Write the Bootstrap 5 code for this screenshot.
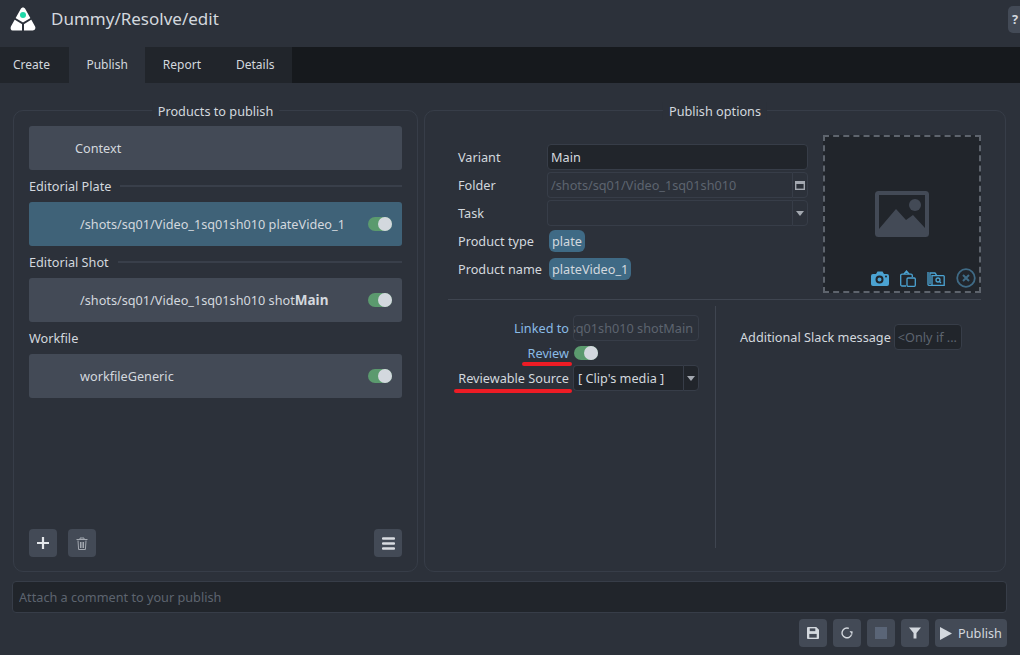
<!DOCTYPE html>
<html lang="en">
<head>
<meta charset="UTF-8">
<title>Publisher</title>
<link rel="stylesheet" href="https://cdn.jsdelivr.net/npm/bootstrap@5.3.0/dist/css/bootstrap.min.css">
<style>
    html, body { height: 655px; overflow: hidden; }
    body { background: #2c313a; color: #d3d8de; font-family: "Noto Sans", sans-serif; font-size: 12.7px; line-height: 18px; }
    .app-head { height: 47px; padding: 0 0 9px 10px; }
    .app-title { font-size: 17px; margin-left: 15px; }
    .help-btn { width: 24px; height: 27px; margin-left: auto; margin-right: -12px; background: #434a56; border-radius: 5px; padding-left: 4px; font-weight: 700; line-height: 27px; }
    .tab-bar { height: 36px; background: #16191d; }
    .tab-item { height: 36px; line-height: 35px; background: #21252b; padding: 0 17.5px; color: #d3d8de; font-size: 12px; text-decoration: none; }
    .tab-item:first-child { padding: 0 19px 0 13px; }
    .tab-item.is-on { background: #2c313a; }
    .main-area { padding: 27px 14px 0 13px; gap: 6px; height: 489px; }
    .group-box { position: relative; border: 1px solid #373d48; border-radius: 10px; height: 462px; }
    .group-left { width: 405px; padding: 15px 15px 14px 15px; }
    .group-right { width: 582px; padding: 24px 24px 23px 22px; }
    .group-title { position: absolute; top: -9px; left: 50%; transform: translateX(-50%); background: #2c313a; padding: 0 6px; white-space: nowrap; }
    .prod-card { height: 44px; background: #434a56; border-radius: 3px; padding-left: 51px; padding-right: 10px; }
    .prod-card.is-sel { background: #3f6278; }
    .prod-card.ctx { padding-left: 46px; }
    .prod-card b { font-size: 13.5px; }
    .sec-head { height: 32px; gap: 9px; }
    .sec-line { flex: 1; height: 2px; background: #393f4a; }
    .toggle-sw { position: relative; display: inline-block; width: 24px; height: 14px; border-radius: 7px; background: #5b9a6e; flex: none; }
    .toggle-sw::after { content: ""; position: absolute; right: 0; top: 0; width: 14px; height: 14px; border-radius: 50%; background: #d3d8de; }
    .tool-btn { width: 28px; height: 28px; padding: 0; background: #434a56; border: 0; border-radius: 4px; display: inline-flex; align-items: center; justify-content: center; flex: none; }
    .tool-btn:hover { background: #4c5461; }
    .trash-btn { margin-left: 11px; }
    .publish-btn { width: 72px; gap: 6px; color: #d3d8de; font-size: 12.7px; }
    .field-input, .field-input:focus, .field-input:disabled { height: 26px; padding: 0 3px; font-size: 12.7px; color: #d3d8de; background: #21252b; border: 1px solid #373d48; border-radius: 4px; box-shadow: none; }
    .field-input:disabled, .field-off { background: #2c313a; color: #5d646f; opacity: 1; }
    .field-input::placeholder { color: #5d646f; opacity: 1; }
    .field-cap { width: 89px; flex: none; white-space: nowrap; }
    .field-row { height: 26px; margin-bottom: 2px; }
    .side-btn { width: 16px; border: 1px solid #373d48; border-radius: 0 4px 4px 0; display: flex; align-items: center; justify-content: center; flex: none; }
    .joined { border-radius: 4px 0 0 4px !important; border-right: 0 !important; }
    .tag-pill { display: inline-block; height: 22px; line-height: 22px; padding: 0 3px; margin-left: 2px; background: #3f6a85; border-radius: 6px; }
    .thumb-box { position: relative; width: 158px; height: 158px; background: #21252b; border: 2px dashed #5e646d; flex: none; }
    .thumb-tools { position: absolute; right: 3px; bottom: 3px; gap: 11px; }
    .form-col { width: 361px; padding: 9px 0 0 11px; }
    .split-line { height: 1px; background: #3f4550; margin: 6px 0 6px 1px; }
    .lower-left { width: 269px; border-right: 1px solid #3f4550; height: 242px; padding-top: 9px; position: relative; }
    .link-cap { color: #8abbe6; }
    .lower-cap { width: 122px; text-align: right; flex: none; margin-right: 4px; white-space: nowrap; }
    .short-field { width: 126px; }
    .review-row { height: 20px; margin-bottom: 2px; }
    .review-row .lower-cap { margin-right: 5px; }
    .linked-box { white-space: nowrap; padding-right: 5px !important; line-height: 24px; }
    .combo-in { background: #21252b !important; padding-left: 4px; }
    .combo-side { background: #21252b; }
    .red-mark { position: absolute; height: 4px; background: #ee1c25; border-radius: 2px; }
    .mark-review { left: 75px; width: 50px; top: 56px; }
    .mark-source { left: 7px; width: 118px; top: 83px; }
    .lower-right { padding: 18px 0 0 24px; }
    .slack-cap { margin: 4px 3px 0 0; white-space: nowrap; }
    .slack-in { width: 68px !important; }
    .comment-wrap { padding: 9px 13px 0 12px; }
    .comment-in, .comment-in:focus { height: 32px; padding: 0 6px; font-size: 12.7px; }
    .action-bar { padding: 6px 13px 0 0; gap: 6px; }
</style>
</head>
<body>
    <div class="app-head d-flex align-items-center">
        <svg width="26" height="24" viewBox="0 0 26 24">
            <path d="M13 0.5c1 0 1.700.5 2.300 1.500l9.800 17.500c.9 1.800-.2 3.900-2.300 3.900H3.200C1.100 23.900 0 21.800.9 19.500L10.700 2c.6-1 1.300-1.500 2.300-1.500z" fill="#fff"/>
            <path d="M4.500 11.500l8.500 5 8.500-5M13 16.500v7.500" fill="none" stroke="#2c313a" stroke-width="2"/>
            <circle cx="13" cy="8" r="3" fill="#1fd8a8"/>
        </svg>
        <div class="app-title">Dummy/Resolve/edit</div>
        <div class="help-btn">?</div>
    </div>

    <nav class="tab-bar d-flex">
        <a class="tab-item" href="#">Create</a>
        <a class="tab-item is-on" href="#">Publish</a>
        <a class="tab-item" href="#">Report</a>
        <a class="tab-item" href="#">Details</a>
    </nav>

    <div class="main-area d-flex">
        <!-- products list -->
        <div class="group-box group-left d-flex flex-column">
            <div class="group-title">Products to publish</div>
            <div class="prod-card ctx d-flex align-items-center">Context</div>
            <div class="sec-head d-flex align-items-center">Editorial Plate<span class="sec-line"></span></div>
            <div class="prod-card is-sel d-flex align-items-center justify-content-between">
                <span>/shots/sq01/Video_1sq01sh010 plateVideo_1</span><span class="toggle-sw"></span>
            </div>
            <div class="sec-head d-flex align-items-center">Editorial Shot<span class="sec-line"></span></div>
            <div class="prod-card d-flex align-items-center justify-content-between">
                <span>/shots/sq01/Video_1sq01sh010 shot<b>Main</b></span><span class="toggle-sw"></span>
            </div>
            <div class="sec-head d-flex align-items-center">Workfile</div>
            <div class="prod-card d-flex align-items-center justify-content-between">
                <span>workfileGeneric</span><span class="toggle-sw"></span>
            </div>
            <div class="d-flex mt-auto">
                <button class="tool-btn" type="button">
                    <svg width="14" height="14" viewBox="0 0 14 14"><path d="M7 1v12M1 7h12" stroke="#e4e7eb" stroke-width="2.200"/></svg>
                </button>
                <button class="tool-btn trash-btn" type="button">
                    <svg width="12" height="13" viewBox="0 0 12 13" fill="none" stroke="#a3a8b0"><path d="M.5 2.500h11M4 2.500V1h4v1.500M2 3.500l.6 9h6.800l.6-9M4.500 5v6M6 5v6M7.500 5v6" stroke-width="1"/></svg>
                </button>
                <button class="tool-btn ms-auto" type="button">
                    <svg width="13" height="13" viewBox="0 0 13 13"><path d="M1 1.500h11M1 6.500h11M1 11.500h11" stroke="#d9dce1" stroke-width="2.400" stroke-linecap="round"/></svg>
                </button>
            </div>
        </div>

        <!-- publish options -->
        <div class="group-box group-right">
            <div class="group-title">Publish options</div>
            <div class="d-flex justify-content-between">
                <div class="form-col">
                    <div class="field-row d-flex align-items-center">
                        <span class="field-cap">Variant</span>
                        <input class="form-control field-input" value="Main">
                    </div>
                    <div class="field-row d-flex align-items-center">
                        <span class="field-cap">Folder</span>
                        <input class="form-control field-input joined" value="/shots/sq01/Video_1sq01sh010" disabled>
                        <span class="side-btn h-100">
                            <svg width="10" height="9" viewBox="0 0 10 9"><rect x=".7" y=".7" width="8.600" height="7.600" fill="none" stroke="#a3a8b0" stroke-width="1.400"/><rect x="1" y="1" width="8" height="2" fill="#a3a8b0"/></svg>
                        </span>
                    </div>
                    <div class="field-row d-flex align-items-center">
                        <span class="field-cap">Task</span>
                        <input class="form-control field-input joined" disabled>
                        <span class="side-btn h-100">
                            <svg width="8" height="5" viewBox="0 0 8 5"><path d="M0 0h8L4 5z" fill="#a3a8b0"/></svg>
                        </span>
                    </div>
                    <div class="field-row d-flex align-items-center">
                        <span class="field-cap">Product type</span><span class="tag-pill">plate</span>
                    </div>
                    <div class="field-row d-flex align-items-center">
                        <span class="field-cap">Product name</span><span class="tag-pill">plateVideo_1</span>
                    </div>
                </div>
                <div class="thumb-box d-flex align-items-center justify-content-center">
                    <svg width="54" height="46" viewBox="0 0 54 46">
                        <rect x="2" y="2" width="50" height="42" rx="1.500" fill="none" stroke="#434a56" stroke-width="4"/>
                        <circle cx="40" cy="14" r="6" fill="#434a56"/>
                        <path d="M4 38L21 18l10 11 7-5 12 13v6H4z" fill="#434a56"/>
                    </svg>
                    <div class="thumb-tools d-flex align-items-center">
                        <svg width="18" height="15" viewBox="0 0 18 15"><path d="M2 3h3l1.500-2.500h5L13 3h3a2 2 0 0 1 2 2v8a2 2 0 0 1-2 2H2a2 2 0 0 1-2-2V5a2 2 0 0 1 2-2z" fill="#4ba3d2"/><circle cx="8.500" cy="8.500" r="3" fill="none" stroke="#21252b" stroke-width="2"/><circle cx="15" cy="5.500" r="1" fill="#21252b"/></svg>
                        <svg width="16" height="17" viewBox="0 0 16 17" fill="none" stroke="#4ba3d2" stroke-width="1.300"><path d="M6 16H2a1.300 1.300 0 0 1-1.300-1.300V5.500A1.300 1.300 0 0 1 2 4.200h9a1.300 1.300 0 0 1 1.300 1.300V7M4 4l2.500-3L9 4"/><rect x="7" y="8" width="8.300" height="8.300" rx="1"/></svg>
                        <svg width="18" height="15" viewBox="0 0 18 15" fill="none" stroke="#4ba3d2" stroke-width="1.300"><path d="M3 13V2h5l1.500 2"/><path d="M1 1v12.500a.8.8 0 0 0 .8.800h15.400V5.500a.8.8 0 0 0-.8-.8H5v9.600"/><circle cx="11" cy="9" r="2"/><path d="M12.500 10.500l1.500 1.500"/></svg>
                        <svg width="20" height="20" viewBox="0 0 20 20" fill="none" stroke="#3f6a85"><circle cx="10" cy="10" r="8.800" stroke-width="1.800"/><path d="M7 7l6 6M13 7l-6 6" stroke-width="2"/></svg>
                    </div>
                </div>
            </div>
            <div class="split-line"></div>
            <div class="d-flex">
                <div class="lower-left">
                    <div class="field-row d-flex align-items-center">
                        <span class="lower-cap link-cap">Linked to</span>
                        <div class="short-field"><div class="form-control field-input field-off linked-box d-flex justify-content-end overflow-hidden">sq01sh010 shotMain</div></div>
                    </div>
                    <div class="review-row d-flex align-items-center">
                        <span class="lower-cap link-cap">Review</span><span class="toggle-sw"></span>
                    </div>
                    <div class="field-row d-flex align-items-center">
                        <span class="lower-cap">Reviewable Source</span>
                        <div class="short-field d-flex h-100">
                            <input class="form-control field-input joined combo-in" value="[ Clip's media ]">
                            <span class="side-btn combo-side">
                                <svg width="8" height="5" viewBox="0 0 8 5"><path d="M0 0h8L4 5z" fill="#a3a8b0"/></svg>
                            </span>
                        </div>
                    </div>
                    <span class="red-mark mark-review"></span>
                    <span class="red-mark mark-source"></span>
                </div>
                <div class="lower-right d-flex align-items-start">
                    <span class="slack-cap">Additional Slack message</span>
                    <input class="form-control field-input slack-in" placeholder="<Only if ...">
                </div>
            </div>
        </div>
    </div>

    <div class="comment-wrap">
        <input class="form-control field-input comment-in" placeholder="Attach a comment to your publish">
    </div>

    <div class="action-bar d-flex justify-content-end">
        <button class="tool-btn" type="button">
            <svg width="12" height="12" viewBox="0 0 13 13"><path d="M1 0h9l3 3v9a1 1 0 0 1-1 1H1a1 1 0 0 1-1-1V1a1 1 0 0 1 1-1z" fill="#d3d8de"/><rect x="3" y="1.500" width="6" height="3" fill="#434a56"/><rect x="2.500" y="7.500" width="8" height="4" fill="#434a56"/></svg>
        </button>
        <button class="tool-btn" type="button">
            <svg width="12" height="12" viewBox="0 0 13 13" fill="none"><path d="M8.500 1.500A5.300 5.300 0 1 0 11.500 8" stroke="#d3d8de" stroke-width="1.500"/><path d="M9 4.500h3.500v3.500z" fill="#d3d8de" transform="rotate(10 10 6)"/></svg>
        </button>
        <button class="tool-btn" type="button">
            <svg width="12" height="12" viewBox="0 0 12 12"><rect width="12" height="12" fill="#5a6577"/></svg>
        </button>
        <button class="tool-btn" type="button">
            <svg width="12" height="12" viewBox="0 0 14 13"><path d="M0 0h14L8.700 6.500V13H5.300V6.500z" fill="#d3d8de"/></svg>
        </button>
        <button class="tool-btn publish-btn" type="button">
            <svg width="12" height="13" viewBox="0 0 12 13"><path d="M0 0l12 6.500L0 13z" fill="#d3d8de"/></svg>
            Publish
        </button>
    </div>
</body>
</html>
